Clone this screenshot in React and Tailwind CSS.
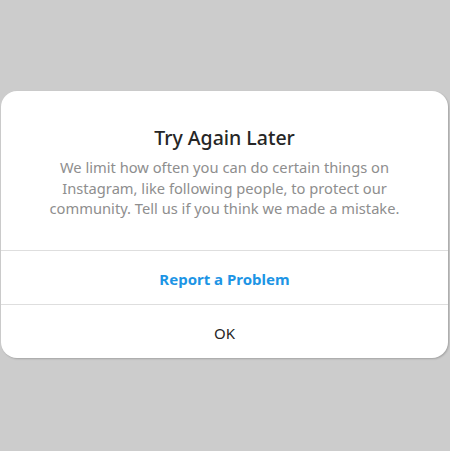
export default function App() {
  return (
    <div className="w-[450px] h-[451px] bg-[#cccccc] pt-[91px] overflow-hidden" style={{ fontFamily: '"Noto Sans", "Open Sans", sans-serif' }}>
      <div className="ml-[1px] w-[447px] h-[267px] bg-white rounded-[16px] shadow-[1px_1px_2px_rgba(0,0,0,0.2)] flex flex-col">
        <div className="h-[160px] flex flex-col items-center pt-[33px] border-b border-[#dedede]">
          <div className="text-[19.5px] leading-[28px] font-medium text-[#262626]">Try Again Later</div>
          <div className="mt-[5px] text-[14.7px] leading-[20.5px] text-[#8e8e8e] text-center w-[380px]">
            We limit how often you can do certain things on Instagram, like following people, to protect our community. Tell us if you think we made a mistake.
          </div>
        </div>
        <div className="h-[54px] pt-[4px] flex items-center justify-center border-b border-[#dedede] text-[15px] font-bold text-[#1d95e5]">
          Report a Problem
        </div>
        <div className="flex-1 pt-[3px] flex items-center justify-center text-[15px] text-[#262626]">OK</div>
      </div>
    </div>
  );
}
